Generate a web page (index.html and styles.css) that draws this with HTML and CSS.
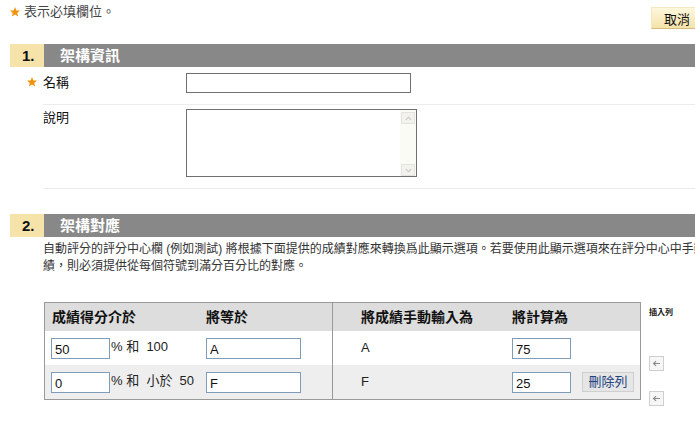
FILE: index.html
```html
<!DOCTYPE html>
<html lang="zh-Hant">
<head>
    <meta charset="UTF-8">
    <title>評分架構</title>
    <link rel="stylesheet" href="styles.css">
</head>
<body>

<div class="page">
    <!-- 必填說明與取消 -->
    <div class="topbar">
        <p class="req-note">
            <svg class="star" viewBox="0 0 10 10"><polygon points="5,0 6.4,3.4 10,3.6 7.2,5.9 8.2,9.6 5,7.6 1.8,9.6 2.8,5.9 0,3.6 3.6,3.4"/></svg>
            表示必填欄位。
        </p>
        <button class="btn-cancel">取消</button>
    </div>

    <!-- 1. 架構資訊 -->
    <div class="step">
        <div class="step-head">
            <span class="step-num">1.</span>
            <h2 class="step-title">架構資訊</h2>
        </div>
        <div class="field field-name">
            <label class="field-label">
                <svg class="star star-req" viewBox="0 0 10 10"><polygon points="5,0 6.4,3.4 10,3.6 7.2,5.9 8.2,9.6 5,7.6 1.8,9.6 2.8,5.9 0,3.6 3.6,3.4"/></svg>名稱
            </label>
            <input type="text" class="name-input">
        </div>
        <div class="field field-desc">
            <label class="field-label">說明</label>
            <div class="textarea-box">
                <textarea class="desc-input"></textarea>
                <div class="fake-scroll">
                    <span class="sb-btn">
                        <svg viewBox="0 0 8 5"><polyline points="1,4 4,1 7,4"/></svg>
                    </span>
                    <span class="sb-btn">
                        <svg viewBox="0 0 8 5"><polyline points="1,1 4,4 7,1"/></svg>
                    </span>
                </div>
            </div>
        </div>
    </div>

    <!-- 2. 架構對應 -->
    <div class="step step-map">
        <div class="step-head">
            <span class="step-num">2.</span>
            <h2 class="step-title">架構對應</h2>
        </div>
        <p class="step-desc">自動評分的評分中心欄 (例如測試) 將根據下面提供的成績對應來轉換爲此顯示選項。若要使用此顯示選項來在評分中心中手動輸入成<br>績，則必須提供從每個符號到滿分百分比的對應。</p>

        <div class="mapping">
            <table class="grade-table">
                <thead>
                    <tr>
                        <th class="c1">成績得分介於</th>
                        <th class="c2">將等於</th>
                        <th class="c3">將成績手動輸入為</th>
                        <th class="c4">將計算為</th>
                    </tr>
                </thead>
                <tbody>
                    <tr class="row1">
                        <td class="c1"><input type="text" class="num-input" value="50"><span class="range">% 和&nbsp; 100</span></td>
                        <td class="c2"><input type="text" class="sym-input" value="A"></td>
                        <td class="c3">A</td>
                        <td class="c4"><input type="text" class="num-input" value="75"></td>
                    </tr>
                    <tr class="row2">
                        <td class="c1"><input type="text" class="num-input" value="0"><span class="range">% 和&nbsp; 小於&nbsp; 50</span></td>
                        <td class="c2"><input type="text" class="sym-input" value="F"></td>
                        <td class="c3">F</td>
                        <td class="c4"><input type="text" class="num-input" value="25"><button class="btn-del">刪除列</button></td>
                    </tr>
                </tbody>
            </table>

            <div class="insert-col">
                <span class="insert-label">插入列</span>
                <span class="arrow-btn arrow-first">
                    <svg viewBox="0 0 10 8"><path d="M9 4H2M4.5 1.2L1.6 4l2.9 2.8"/></svg>
                </span>
                <span class="arrow-btn">
                    <svg viewBox="0 0 10 8"><path d="M9 4H2M4.5 1.2L1.6 4l2.9 2.8"/></svg>
                </span>
            </div>
        </div>
    </div>
</div>

</body>
</html>
```

FILE: styles.css
```css
html, body {
    margin: 0;
    overflow: hidden;
    background-color: #fff;
}
body {
    font-family: "Liberation Sans", "Noto Sans CJK TC", sans-serif;
    font-size: 13px;
    color: #222;
}
.page {
    width: 760px;
    padding-left: 10px;
}

/* 上方列 */
.topbar {
    display: flex;
    align-items: flex-start;
    height: 44px;
}
.req-note {
    margin: 3px 0 0;
    line-height: 17px;
    color: #444;
    display: flex;
    align-items: center;
}
.star {
    width: 10px;
    height: 10px;
    fill: #f2920c;
    margin-right: 4px;
}
.btn-cancel {
    margin: 7px 0 0 536px;
    height: 22px;
    width: 58px;
    padding: 0 6px 0 0;
    font-family: inherit;
    font-size: 13px;
    color: #111;
    background: linear-gradient(#fdf7dc, #f4e3a9);
    border: 1px solid #f4e8c0;
    border-right-color: #d9c68c;
    border-bottom-color: #d3bd7c;
}

/* 步驟標題 */
.step-head {
    display: flex;
    height: 23px;
}
.step-num {
    width: 34px;
    background-color: #f6e3aa;
    font-size: 15px;
    font-weight: bold;
    line-height: 23px;
    padding-left: 12px;
    box-sizing: border-box;
    color: #111;
}
.step-title {
    flex: 1;
    margin: 0;
    background-color: #888;
    color: #fff;
    font-size: 15px;
    font-weight: bold;
    line-height: 23px;
    padding-left: 16px;
}

/* 表單欄位 */
.field {
    display: flex;
    margin-left: 33px;
    border-bottom: 1px solid #ececec;
}
.field-name {
    padding: 6px 0 11px;
}
.field-desc {
    padding: 4px 0 11px;
}
.field-label {
    width: 143px;
    line-height: 20px;
    font-size: 13px;
    color: #111;
}
.field-desc .field-label {
    line-height: 18px;
}
.star-req {
    margin-left: -16px;
    margin-right: 6px;
}
.name-input {
    width: 225px;
    height: 20px;
    box-sizing: border-box;
    border: 1px solid #707070;
    margin: 0;
    padding: 1px 3px;
}
.textarea-box {
    display: flex;
    width: 231px;
    height: 68px;
    box-sizing: border-box;
    border: 1px solid #707070;
}
.desc-input {
    flex: 1;
    border: none;
    resize: none;
    margin: 0;
    outline: none;
}
.fake-scroll {
    width: 16px;
    background-color: #fbfbf6;
    display: flex;
    flex-direction: column;
    justify-content: space-between;
    padding: 2px 0 0 1px;
    box-sizing: border-box;
}
.sb-btn {
    display: flex;
    align-items: center;
    justify-content: center;
    width: 14px;
    height: 12px;
    background-color: #f2f2ee;
    border: 1px solid #e4e4dc;
    box-sizing: border-box;
}
.sb-btn svg {
    width: 7px;
    height: 5px;
    fill: none;
    stroke: #c8c8c0;
    stroke-width: 1.3;
}

/* 2. 架構對應 */
.step-map {
    margin-top: 25px;
}
.step-desc {
    margin: 4px 0 0 33px;
    font-size: 12px;
    line-height: 17px;
    color: #333;
    white-space: nowrap;
}
.mapping {
    display: flex;
    align-items: flex-start;
    margin: 27px 0 0 34px;
}
.grade-table {
    width: 597px;
    border-collapse: collapse;
    border: 1px solid #999;
}
.grade-table th {
    background-color: #ddd;
    height: 28px;
    line-height: 20px;
    text-align: left;
    font-size: 14px;
    font-weight: bold;
    color: #111;
    padding: 0;
}
.grade-table td {
    padding: 0;
    line-height: 20px;
    font-size: 13px;
    color: #222;
    white-space: nowrap;
}
.row1 td {
    height: 34px;
    background-color: #fff;
}
.row2 td {
    height: 34px;
    background-color: #eee;
}
.c1 {
    width: 146px;
    padding-left: 6px !important;
}
.grade-table th.c1 {
    padding-left: 7px !important;
}
.c2 {
    width: 126px;
    padding-left: 8px !important;
    border-right: 1px solid #999;
}
.c3 {
    width: 144px;
    padding-left: 28px !important;
}
.c4 {
    padding-left: 7px !important;
}
.num-input, .sym-input {
    height: 21px;
    box-sizing: border-box;
    border: 1px solid #7f9db9;
    margin: 0;
    padding: 2px 3px 0;
    font-family: inherit;
    font-size: 13px;
    color: #111;
    vertical-align: middle;
}
.num-input {
    width: 59px;
}
.sym-input {
    width: 95px;
}
.range {
    margin-left: 1px;
    vertical-align: middle;
    position: relative;
    top: -1px;
}
.btn-del {
    margin-left: 11px;
    width: 52px;
    height: 20px;
    padding: 0;
    font-family: inherit;
    font-size: 13px;
    line-height: 18px;
    color: #24427e;
    background-color: #e6e6e6;
    border: 1px solid #cfcfcf;
    vertical-align: middle;
}

/* 插入列 */
.insert-col {
    display: flex;
    flex-direction: column;
    margin-left: 8px;
}
.insert-label {
    font-size: 8px;
    font-weight: bold;
    line-height: 10px;
    margin-top: 6px;
    color: #111;
}
.arrow-btn {
    display: flex;
    align-items: center;
    justify-content: center;
    width: 15px;
    height: 15px;
    box-sizing: border-box;
    border: 1px solid #cfcfcf;
    background-color: #f6f6f6;
    margin-top: 20px;
}
.arrow-first {
    margin-top: 38px;
}
.arrow-btn svg {
    width: 9px;
    height: 7px;
    fill: none;
    stroke: #8a8a8a;
    stroke-width: 1.3;
}
```
